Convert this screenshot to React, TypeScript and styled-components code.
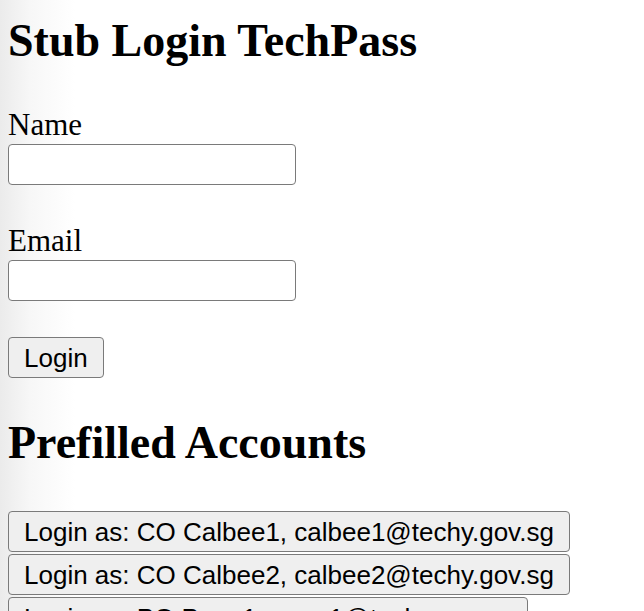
import React from "react";
import styled, { createGlobalStyle } from "styled-components";

const GlobalStyle = createGlobalStyle`
  html {
    min-height: 100%;
    background: linear-gradient(to right, #ebebeb 0px, #f7f7f7 30px, #ffffff 75px);
  }
  body {
    margin: 8px;
    font-family: "Liberation Serif", "Times New Roman", serif;
    color: #000;
  }
`;

const Page = styled.main`
  display: flex;
  flex-direction: column;
  align-items: flex-start;
`;

const Heading = styled.h1<{ $top: number }>`
  margin: ${(p) => p.$top}px 0 0;
  font-family: "Liberation Serif", "Times New Roman", serif;
  font-weight: 700;
  font-size: 46px;
  line-height: 53px;
`;

const LoginForm = styled.form`
  display: flex;
  flex-direction: column;
  align-items: flex-start;
  margin-top: 39px;
`;

const Field = styled.div<{ $top: number }>`
  display: flex;
  flex-direction: column;
  align-items: flex-start;
  gap: 1px;
  margin-top: ${(p) => p.$top}px;
`;

const Label = styled.label`
  font-family: "Liberation Serif", "Times New Roman", serif;
  font-size: 31px;
  line-height: 37px;
`;

const TextInput = styled.input`
  box-sizing: border-box;
  width: 288px;
  height: 41px;
  margin: 0;
  padding: 2px 6px;
  border: 1px solid #7a7a7a;
  border-radius: 4px;
  background: #fff;
  font-family: "Liberation Sans", Arial, sans-serif;
  font-size: 20px;
`;

const Button = styled.button<{ $top?: number }>`
  box-sizing: border-box;
  height: 41px;
  margin: ${(p) => p.$top ?? 0}px 0 0;
  padding: 0 15px;
  border: 1px solid #7a7a7a;
  border-radius: 4px;
  background: #efefef;
  color: #000;
  font-family: "Liberation Sans", Arial, sans-serif;
  font-size: 26px;
  line-height: 1;
  white-space: nowrap;
  cursor: pointer;
`;

const AccountList = styled.div`
  display: flex;
  flex-direction: column;
  align-items: flex-start;
  gap: 2px;
  margin-top: 42px;
`;

const accounts = [
  { role: "CO", name: "Calbee1", email: "calbee1@techy.gov.sg" },
  { role: "CO", name: "Calbee2", email: "calbee2@techy.gov.sg" },
  { role: "PO", name: "Poon1", email: "poon1@techy.gov.sg" },
];

export default function App() {
  return (
    <>
      <GlobalStyle />
      <Page>
        <Heading $top={6}>Stub Login TechPass</Heading>
        <LoginForm onSubmit={(e) => e.preventDefault()}>
          <Field $top={0}>
            <Label htmlFor="name">Name</Label>
            <TextInput id="name" type="text" />
          </Field>
          <Field $top={37}>
            <Label htmlFor="email">Email</Label>
            <TextInput id="email" type="email" />
          </Field>
          <Button type="submit" $top={36}>
            Login
          </Button>
        </LoginForm>
        <Heading as="h2" $top={38}>
          Prefilled Accounts
        </Heading>
        <AccountList>
          {accounts.map((a) => (
            <Button key={a.email} type="button">
              Login as: {a.role} {a.name}, {a.email}
            </Button>
          ))}
        </AccountList>
      </Page>
    </>
  );
}
